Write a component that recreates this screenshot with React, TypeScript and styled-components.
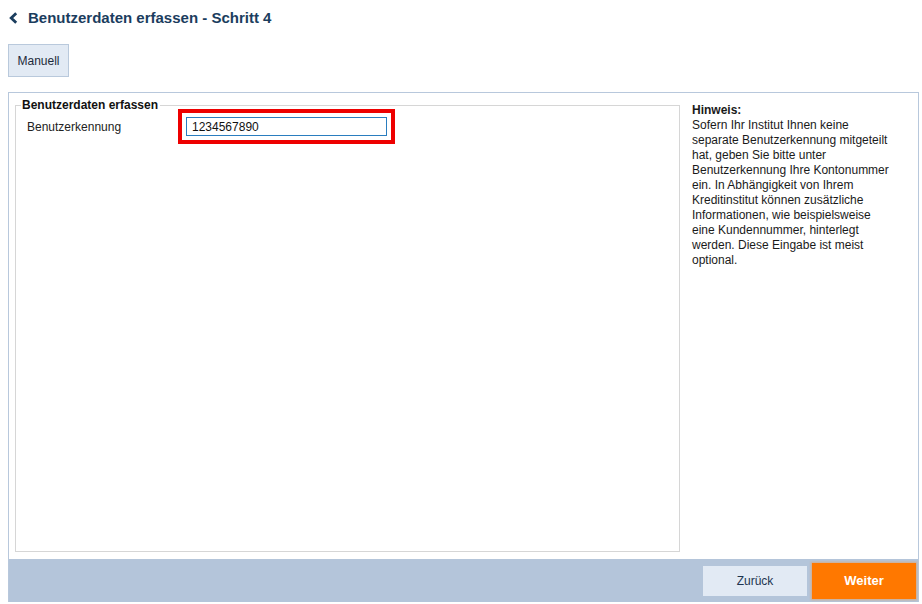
import React from "react";
import styled, { createGlobalStyle } from "styled-components";

const Global = createGlobalStyle`
  html, body { margin: 0; padding: 0; background: #fff; }
  body { font-family: "Liberation Sans", Arial, sans-serif; font-size: 12px; color: #1a1a1a; }
  * { box-sizing: border-box; }
`;

const Page = styled.div`
  width: 922px;
  height: 604px;
  padding: 0 3px 0 8px;
  display: flex;
  flex-direction: column;
`;

const Header = styled.div`
  height: 35px;
  display: flex;
  align-items: center;
  gap: 10px;
  padding-left: 1px;
`;

const Title = styled.h1`
  margin: 0;
  font-size: 15px;
  font-weight: bold;
  color: #1b3d5e;
`;

const Toolbar = styled.div`
  height: 57px;
  padding-top: 9px;
`;

const ToolButton = styled.button`
  height: 33px;
  width: 61px;
  background: #e2eaf4;
  border: 1px solid #b9c9dc;
  font-family: inherit;
  font-size: 12px;
  color: #1d2b3a;
  padding: 0;
`;

const Panel = styled.div`
  flex: 1;
  border: 1px solid #b8c8dc;
  border-bottom: none;
  display: flex;
  flex-direction: column;
  margin-bottom: 2px;
`;

const Body = styled.div`
  flex: 1;
  display: flex;
  padding: 0 0 7px 6px;
`;

const Fieldset = styled.fieldset`
  width: 665px;
  margin: 5px 0 0 0;
  padding: 0;
  border: 1px solid #d6d6d6;
  min-width: 0;
`;

const Legend = styled.legend`
  font-weight: bold;
  font-size: 12px;
  color: #111;
  padding: 0 2px 0 1px;
  margin-left: 5px;
`;

const FieldRow = styled.div`
  display: flex;
  align-items: center;
  margin-top: -3px;
  padding-left: 11px;
`;

const Label = styled.label`
  width: 151px;
  color: #222;
`;

const Highlight = styled.div`
  border: 4px solid #ee0000;
  padding: 4px;
  width: 217px;
  height: 35px;
`;

const Input = styled.input`
  width: 201px;
  height: 19px;
  border: 1px solid #2a7dbf;
  font-family: inherit;
  font-size: 12px;
  color: #111;
  padding: 0 5px;
  outline: none;
`;

const Aside = styled.aside`
  width: 212px;
  padding: 10px 0 0 12px;
  line-height: 15px;
  color: #1a1a1a;
`;

const AsideTitle = styled.div`
  font-weight: bold;
`;

const Footer = styled.div`
  height: 43px;
  background: #b4c5da;
  display: flex;
  justify-content: flex-end;
  align-items: center;
  gap: 5px;
  padding-right: 2px;
`;

const FooterButton = styled.button<{ $primary?: boolean }>`
  width: 104px;
  height: ${(p) => (p.$primary ? "36px" : "30px")};
  border: none;
  font-family: inherit;
  font-size: ${(p) => (p.$primary ? "13px" : "12px")};
  font-weight: ${(p) => (p.$primary ? "bold" : "normal")};
  color: ${(p) => (p.$primary ? "#fff" : "#1d3550")};
  background: ${(p) => (p.$primary ? "#ff7800" : "#e2eaf4")};
  box-shadow: ${(p) => (p.$primary ? "0 0 2px 1px rgba(255,140,40,0.45)" : "none")};
  padding: 0;
`;

export default function App() {
  return (
    <>
      <Global />
      <Page>
        <Header>
          <svg width="9" height="12" viewBox="0 0 9 12">
            <path d="M7.2 1.2 L2.2 6 L7.2 10.8" stroke="#1b3d5e" strokeWidth="2.8" fill="none" />
          </svg>
          <Title>Benutzerdaten erfassen - Schritt 4</Title>
        </Header>
        <Toolbar>
          <ToolButton>Manuell</ToolButton>
        </Toolbar>
        <Panel>
          <Body>
            <Fieldset>
              <Legend>Benutzerdaten erfassen</Legend>
              <FieldRow>
                <Label>Benutzerkennung</Label>
                <Highlight>
                  <Input defaultValue="1234567890" />
                </Highlight>
              </FieldRow>
            </Fieldset>
            <Aside>
              <AsideTitle>Hinweis:</AsideTitle>
              Sofern Ihr Institut Ihnen keine separate Benutzerkennung mitgeteilt hat, geben Sie bitte unter
              Benutzerkennung Ihre Kontonummer ein. In Abhängigkeit von Ihrem Kreditinstitut können zusätzliche
              Informationen, wie beispielsweise eine Kundennummer, hinterlegt werden. Diese Eingabe ist meist optional.
            </Aside>
          </Body>
          <Footer>
            <FooterButton>Zurück</FooterButton>
            <FooterButton $primary>Weiter</FooterButton>
          </Footer>
        </Panel>
      </Page>
    </>
  );
}
